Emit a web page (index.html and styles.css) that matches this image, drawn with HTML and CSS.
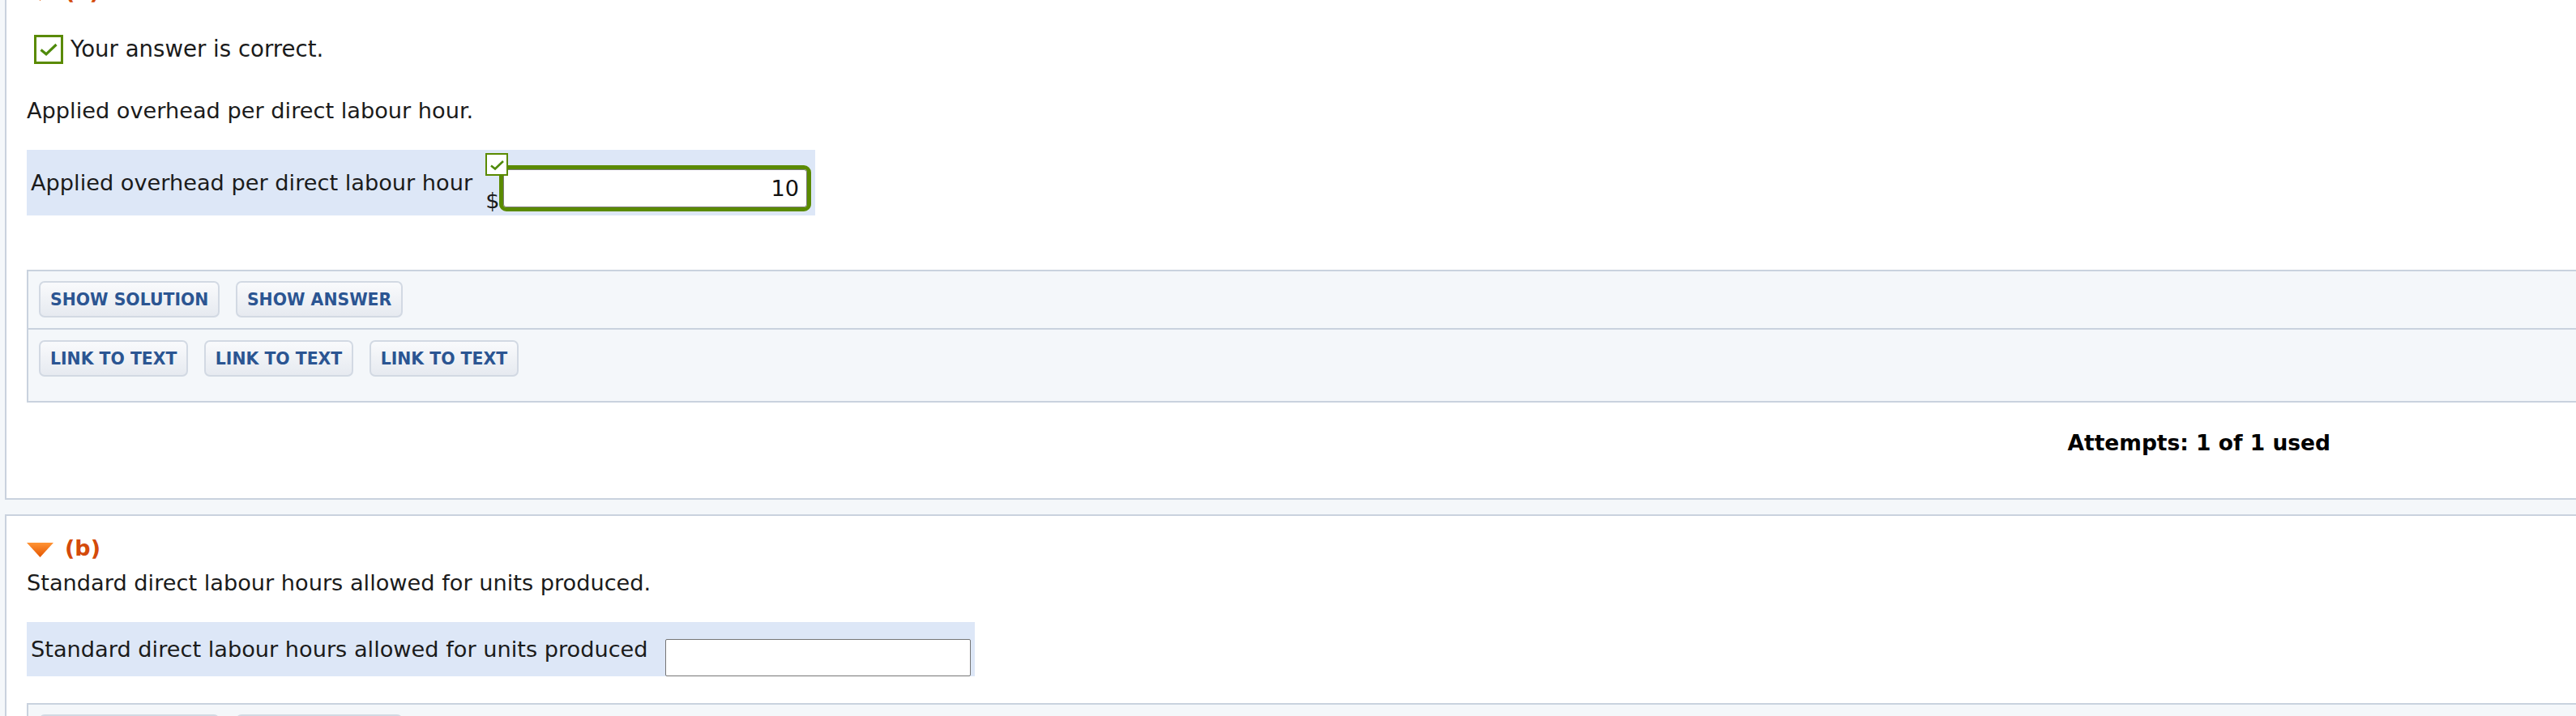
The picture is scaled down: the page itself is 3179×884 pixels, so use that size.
FILE: index.html
```html
<!DOCTYPE html>
<html lang="en">
<head>
<meta charset="utf-8">
<title>Question parts</title>
<link rel="stylesheet" href="styles.css">
</head>
<body>
<div class="page">
  <section class="part part-a">
    <h2 class="part-head">
      <svg class="caret" width="33" height="18" viewBox="0 0 33 18"><defs><linearGradient id="cg1" x1="0" y1="0" x2="0" y2="1"><stop offset="0" stop-color="#ff9435"/><stop offset="1" stop-color="#e45500"/></linearGradient></defs><polygon points="0,0 33,0 16.5,18" fill="url(#cg1)"/></svg>
      <span>(a)</span>
    </h2>
    <div class="result">
      <svg class="check-big" width="36" height="36" viewBox="0 0 36 36"><rect x="1.5" y="1.5" width="33" height="33" fill="#fff" stroke="#5a8a00" stroke-width="3"/><path d="M8.5 18.5 L15 23.8 L27.5 12" fill="none" stroke="#4f8a0b" stroke-width="3.2"/></svg>
      <span class="result-text">Your answer is correct.</span>
    </div>
    <p class="prompt">Applied overhead per direct labour hour.</p>
    <div class="answer-row">
      <label class="answer-label">Applied overhead per direct labour hour</label>
      <div class="answer-cell">
        <span class="unit">$</span>
        <span class="input-wrap">
          <input class="answer-input correct" type="text" value="10" readonly>
          <svg class="badge" width="28" height="28" viewBox="0 0 28 28"><rect x="1" y="1" width="26" height="26" fill="#fff" stroke="#5a8a00" stroke-width="2"/><path d="M7 15.5 L12 19.5 L22 10" fill="none" stroke="#4f8a0b" stroke-width="2.6"/></svg>
        </span>
      </div>
    </div>
    <div class="tools">
      <div class="tools-row">
        <button class="tool-btn">SHOW SOLUTION</button>
        <button class="tool-btn">SHOW ANSWER</button>
      </div>
      <div class="tools-row links">
        <button class="tool-btn">LINK TO TEXT</button>
        <button class="tool-btn">LINK TO TEXT</button>
        <button class="tool-btn">LINK TO TEXT</button>
      </div>
    </div>
    <div class="attempts">Attempts: 1 of 1 used</div>
  </section>

  <section class="part part-b">
    <h2 class="part-head">
      <svg class="caret" width="33" height="18" viewBox="0 0 33 18"><defs><linearGradient id="cg2" x1="0" y1="0" x2="0" y2="1"><stop offset="0" stop-color="#ff9435"/><stop offset="1" stop-color="#e45500"/></linearGradient></defs><polygon points="0,0 33,0 16.5,18" fill="url(#cg2)"/></svg>
      <span>(b)</span>
    </h2>
    <p class="prompt prompt-b">Standard direct labour hours allowed for units produced.</p>
    <div class="answer-row row-b">
      <label class="answer-label">Standard direct labour hours allowed for units produced</label>
      <input class="plain-input" type="text">
    </div>
    <div class="tools tools-b">
      <div class="tools-row">
        <button class="tool-btn">SHOW SOLUTION</button>
        <button class="tool-btn">SHOW ANSWER</button>
      </div>
    </div>
  </section>
</div>
</body>
</html>
```

FILE: styles.css
```css
html, body {
  margin: 0;
  padding: 0;
}

body {
  background: #f4f7fa;
  font-family: "DejaVu Sans", Verdana, sans-serif;
  font-size: 27.2px;
  color: #1b1b1b;
  overflow: hidden;
}

.page {
  margin-top: -52px;
  padding-left: 6px;
  display: flex;
  flex-direction: column;
  gap: 18px;
}

.part {
  background: #fff;
  border: 2px solid #c9d2de;
  border-right: none;
  padding: 22px 0 0 25px;
}

.part-head {
  margin: 0;
  display: flex;
  align-items: center;
  gap: 14px;
  font-size: 27px;
  line-height: 36px;
  font-weight: bold;
  color: #d44a0a;
}

.caret {
  display: block;
  margin-top: 4px;
}

.result {
  display: flex;
  align-items: center;
  gap: 9px;
  margin: 35px 0 0 9px;
  height: 36px;
  line-height: 36px;
}

.check-big {
  display: block;
  flex: none;
}

.result-text {
  color: #1b1b1b;
  font-size: 27.6px;
}

.prompt {
  margin: 40px 0 0;
  line-height: 36px;
}

.prompt-b {
  margin-top: 7px;
}

.answer-row {
  margin-top: 30px;
  display: flex;
  align-items: center;
  width: fit-content;
  background: #dde7f7;
  padding: 0 5px 0 5px;
}

.answer-label {
  line-height: 36px;
  margin-right: 16px;
}

.answer-cell {
  display: flex;
  align-items: flex-end;
  padding: 19px 0 5px;
}

.unit {
  line-height: 1;
  width: 17px;
}

.input-wrap {
  position: relative;
  display: block;
}

.answer-input {
  display: block;
  box-sizing: border-box;
  width: 385px;
  height: 57px;
  margin: 0;
  border: 5px solid #5a8a00;
  border-radius: 9px;
  box-shadow: inset 0 0 0 1px #7d7d7d;
  background: #fff;
  padding: 0 10px 0 0;
  text-align: right;
  font-family: inherit;
  font-size: 27.2px;
  color: #111;
  outline: none;
}

.badge {
  position: absolute;
  left: -17px;
  top: -15px;
  display: block;
}

.row-b {
  padding: 21px 5px 0 5px;
  align-items: flex-end;
}

.row-b .answer-label {
  align-self: center;
  margin-top: -21px;
  margin-right: 21px;
}

.plain-input {
  display: block;
  box-sizing: border-box;
  width: 377px;
  height: 46px;
  margin: 0;
  border: 1px solid #767676;
  border-radius: 2px;
  background: #fff;
  font-family: inherit;
  font-size: 27.2px;
}

.tools {
  margin-top: 67px;
  background: #f4f7fa;
  border: 2px solid #c9d2de;
  border-right: none;
}

.tools-b {
  margin-top: 33px;
}

.tools-row {
  display: flex;
  gap: 19.5px;
  padding: 12px 13px 13px;
}

.tools-row.links {
  border-top: 2px solid #c9d2de;
  padding: 13px 13px 30px;
}

.tool-btn {
  height: 45px;
  box-sizing: border-box;
  padding: 0 12px;
  border: 2px solid #d2d9e3;
  border-radius: 7px;
  background: linear-gradient(#f9fafc, #e6eaf0);
  font-family: "DejaVu Sans", Verdana, sans-serif;
  font-weight: bold;
  font-size: 20.4px;
  color: #2b5592;
  cursor: pointer;
}

.attempts {
  margin-top: 32px;
  padding: 0 303px 50px 0;
  text-align: right;
  font-weight: bold;
  font-size: 26.5px;
  line-height: 36px;
  color: #000;
}
```
